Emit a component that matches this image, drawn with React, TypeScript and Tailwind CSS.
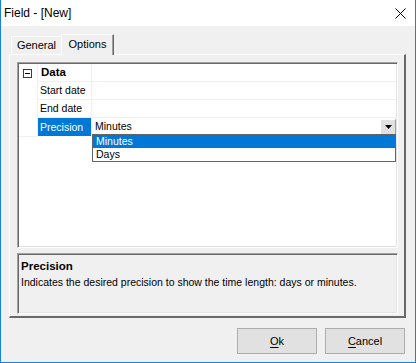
import React from "react";

const sunken =
  "border border-t-[#a0a0a0] border-l-[#a0a0a0] border-r-white border-b-white shadow-[inset_1px_1px_0_#696969,inset_-1px_-1px_0_#e3e3e3]";

function PropRow({
  name,
  selected,
  children,
}: {
  name: string;
  selected?: boolean;
  children?: React.ReactNode;
}) {
  return (
    <div className="flex h-[18px]">
      <div className="w-[18px] shrink-0" />
      <div
        className={
          "w-[55px] shrink-0 border-l border-r border-[#f0f0f0] pl-[2px] flex items-center " +
          (selected ? "bg-[#0078d7] text-white border-b-[#0078d7]" : "border-b")
        }
      >
        {name}
      </div>
      <div className="flex-1 border-b border-[#f0f0f0] flex items-center">
        {children}
      </div>
    </div>
  );
}

function Button({ accel, rest }: { accel: string; rest: string }) {
  return (
    <button className="w-[80px] h-[26px] bg-[#e1e1e1] border border-[#adadad] flex items-center justify-center text-[11px]">
      <span>
        <span className="underline underline-offset-[2px]">{accel}</span>
        {rest}
      </span>
    </button>
  );
}

export default function App() {
  return (
    <div className="w-[416px] h-[363px] border-x border-b border-[#1883d7] bg-[#f0f0f0] flex flex-col font-['Liberation_Sans',Arial,sans-serif] text-[10.5px] text-black leading-none">
      {/* title bar */}
      <div className="h-[26px] bg-white flex items-center justify-between pl-[3px] pr-[9px] shrink-0">
        <span className="text-[12px]">Field - [New]</span>
        <svg width="11" height="11" viewBox="0 0 11 11" className="mt-[1px]">
          <path d="M0.5 0.5 L10.5 10.5 M10.5 0.5 L0.5 10.5" stroke="#000" strokeWidth="1" />
        </svg>
      </div>

      <div className="flex-1 flex flex-col pl-[8px] pr-[9px] pt-[8px]">
        {/* tabs */}
        <div className="flex items-end pl-[2px] h-[20px] relative z-10 text-[11px]">
          <div className="w-[50px] h-[17px] border-l border-t border-white flex items-center justify-center mb-px">
            General
          </div>
          <div className="w-[53px] h-[21px] -mb-px bg-[#f0f0f0] border-l border-t border-white border-r border-r-[#696969] shadow-[inset_-1px_0_0_#a0a0a0] flex items-center justify-center pb-[2px]">
            Options
          </div>
        </div>

        {/* panel */}
        <div className="h-[264px] border-l border-t border-white border-r-2 border-b-2 border-r-[#696969] border-b-[#696969] pl-[7px] pr-[6px] pt-[7px] flex flex-col gap-[5px]">
          <div className={"h-[186px] bg-white relative " + sunken}>
            <div className="p-[1px]">
              <div className="flex h-[18px]">
                <div className="w-[18px] shrink-0 flex items-center pl-[4px]">
                  <div className="w-[9px] h-[9px] border border-[#3c3c3c] flex items-center justify-center">
                    <div className="w-[5px] h-px bg-black" />
                  </div>
                </div>
                <div className="w-[55px] shrink-0 border-l border-r border-b border-[#f0f0f0] pl-[3px] flex items-center font-bold text-[11.5px]">
                  Data
                </div>
                <div className="flex-1 border-b border-[#f0f0f0]" />
              </div>
              <PropRow name="Start date" />
              <PropRow name="End date" />
              <div className="relative">
                <PropRow name="Precision" selected>
                  <span className="pl-[3px] flex-1">Minutes</span>
                  <div className="w-[16px] h-[16px] bg-[#e1e1e1] border border-white border-r-[#a0a0a0] border-b-[#a0a0a0] flex items-center justify-center">
                    <svg width="7" height="4" viewBox="0 0 7 4">
                      <path d="M0 0 H7 L3.5 4 Z" fill="#000" />
                    </svg>
                  </div>
                </PropRow>
                <div className="w-[18px] h-px bg-[#f0f0f0]" />
                {/* dropdown list */}
                <div className="absolute left-[73px] right-0 top-[16px] h-[28px] bg-white border border-[#646464] flex flex-col">
                  <div className="h-[13px] bg-[#0078d7] text-white pl-[3px] flex items-center">
                    Minutes
                  </div>
                  <div className="h-[13px] pl-[3px] flex items-center">Days</div>
                </div>
              </div>
            </div>
          </div>

          <div className={"h-[61px] bg-[#f0f0f0] px-[3px] pt-[5px] " + sunken}>
            <div className="font-bold text-[11.5px] h-[15px] flex items-center">Precision</div>
            <div className="h-[16px] flex items-center">
              Indicates the desired precision to show the time length: days or minutes.
            </div>
          </div>
        </div>

        {/* buttons */}
        <div className="flex justify-end gap-[8px] mt-[10px] pr-[1px]">
          <Button accel="O" rest="k" />
          <Button accel="C" rest="ancel" />
        </div>
      </div>
    </div>
  );
}
